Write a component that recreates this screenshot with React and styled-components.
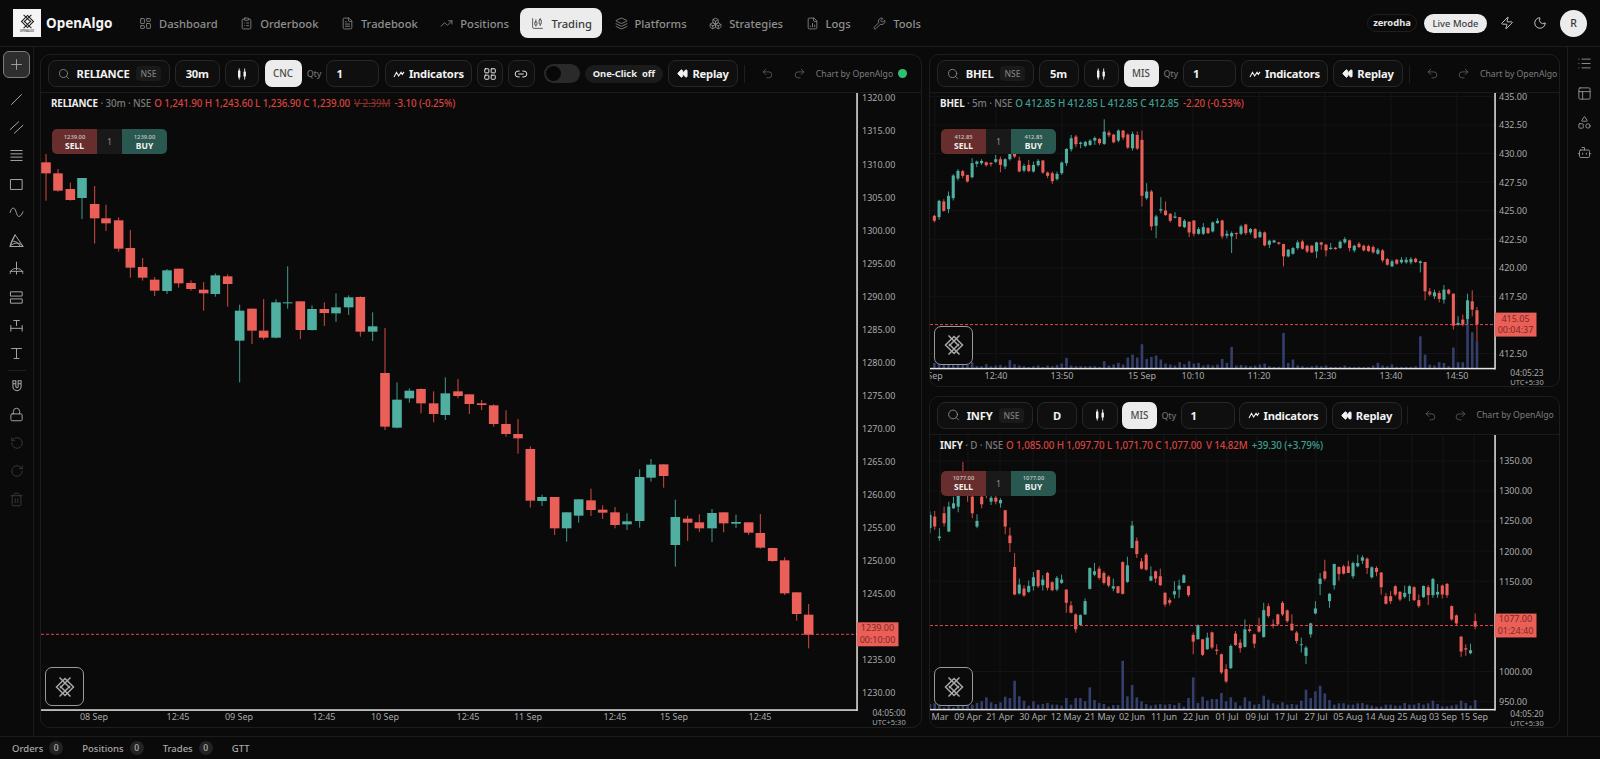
import React from 'react'
import styled, { createGlobalStyle } from 'styled-components'
import {
  Bot,
  ChartCandlestick,
  ClipboardList,
  FileChartColumn,
  FileText,
  LayoutDashboard,
  LayoutGrid,
  Layers,
  Link2,
  List,
  Lock,
  Moon,
  PanelsTopLeft,
  Plus,
  Redo2,
  RotateCcw,
  RotateCw,
  Search,
  Shapes,
  Trash2,
  TrendingUp,
  Undo2,
  Boxes,
  Wrench,
  Zap,
  Rewind,
} from 'lucide-react'

const RED = '#ea5f58'
const GREEN = '#4fb0a2'
const RED_WICK = '#d34a45'
const GREEN_WICK = '#3f9c8f'

const GlobalStyle = createGlobalStyle`
  html, body {
    margin: 0;
    height: 100%;
    background: #0a0a0a;
    color: #e8e8e8;
    font-family: "Noto Sans", "Open Sans", Arial, sans-serif;
  }
  #root { height: 100%; }
  * { box-sizing: border-box; }
`

const Page = styled.div`
  display: flex;
  flex-direction: column;
  height: 759px;
  overflow: hidden;
`

const Nav = styled.header`
  align-items: center;
  border-bottom: 1px solid #1c1c1c;
  display: flex;
  flex: 0 0 47px;
  padding: 0 13px;
`

const Brand = styled.div`
  align-items: center;
  color: #f4f4f4;
  display: flex;
  flex: 0 0 115px;
  font-size: 13.5px;
  font-weight: 700;
  gap: 5px;
`

const BrandTile = styled.div`
  align-items: center;
  background: #f4f4f4;
  color: #222;
  display: flex;
  flex-direction: column;
  height: 28px;
  justify-content: center;
  width: 28px;

  span {
    color: #555;
    font-size: 2.5px;
    line-height: 3px;
  }
`

const NavItem = styled.div`
  align-items: center;
  background: ${props => (props.$active ? '#ececec' : 'transparent')};
  border-radius: 8px;
  color: ${props => (props.$active ? '#3a3a3a' : '#8f8f8f')};
  display: flex;
  font-size: 11.2px;
  font-weight: 500;
  gap: 7px;
  height: 30px;
  margin-right: 1.5px;
  padding: 0 10px 0 11px;
`

const NavRight = styled.div`
  align-items: center;
  display: flex;
  margin-left: auto;
`

const BrokerPill = styled.div`
  border: 1px solid #1f1f1f;
  border-radius: 10px;
  color: #e6e6e6;
  font-size: 9.4px;
  font-weight: 700;
  height: 18px;
  line-height: 16px;
  margin-right: 7px;
  text-align: center;
  width: 50px;
`

const ModePill = styled.div`
  background: #ececec;
  border-radius: 10px;
  color: #3c3c3c;
  font-size: 9.4px;
  font-weight: 500;
  height: 19px;
  line-height: 19px;
  text-align: center;
  width: 63px;
`

const NavIconButton = styled.div`
  align-items: center;
  color: #d8d8d8;
  display: flex;
  height: 27px;
  justify-content: center;
  margin-left: ${props => props.$ml || 0}px;
  width: 14px;
`

const Avatar = styled.div`
  align-items: center;
  background: #ececec;
  border-radius: 50%;
  color: #333;
  display: flex;
  font-size: 10.5px;
  font-weight: 500;
  height: 27px;
  justify-content: center;
  margin-left: 13px;
  width: 27px;
`

const Body = styled.div`
  display: flex;
  flex: 1;
  min-height: 0;
`

const LeftBar = styled.aside`
  align-items: center;
  border-right: 1px solid #1c1c1c;
  display: flex;
  flex: 0 0 34px;
  flex-direction: column;
  padding-top: 4px;
`

const ToolButton = styled.div`
  align-items: center;
  background: ${props => (props.$active ? '#2e2e2e' : 'transparent')};
  border: ${props => (props.$active ? '1.5px solid #7c7c7c' : 'none')};
  border-radius: 6px;
  color: ${props => (props.$dim ? '#3b3b3b' : '#a6a6a6')};
  display: flex;
  flex: 0 0 ${props => (props.$active ? '27px' : '28.3px')};
  justify-content: center;
  margin-bottom: ${props => (props.$active ? '7px' : 0)};
  width: 27px;
`

const ToolDivider = styled.div`
  background: #1e1e1e;
  flex: 0 0 1px;
  margin: 2px 0 1px;
  width: 18px;
`

const Main = styled.main`
  display: grid;
  flex: 1;
  gap: 9px 7px;
  grid-template-columns: 882px 631px;
  grid-template-rows: 1fr 1fr;
  min-width: 0;
  padding: 7px 7px 8px 6px;
`

const Card = styled.section`
  border: 1px solid #1d1d1d;
  border-radius: 10px;
  display: flex;
  flex-direction: column;
  grid-row: ${props => (props.$tall ? '1 / span 2' : 'auto')};
  min-height: 0;
  overflow: hidden;
`

const CardHeader = styled.div`
  align-items: center;
  border-bottom: 1px solid #1a1a1a;
  display: flex;
  flex: 0 0 38px;
  gap: ${props => props.$gap}px;
  overflow: hidden;
  padding: 0 0 0 6.5px;
`

const Control = styled.div`
  align-items: center;
  background: #0f0f0f;
  border: 1px solid #272727;
  border-radius: 8px;
  color: #f2f2f2;
  display: flex;
  flex: 0 0 ${props => props.$w}px;
  font-size: 11.2px;
  font-weight: 700;
  gap: ${props => (props.$left ? 7 : 4)}px;
  height: 27px;
  justify-content: ${props => (props.$left ? 'flex-start' : 'center')};
  letter-spacing: -0.2px;
  min-width: 0;
  padding: ${props => (props.$left ? '0 8px 0 9px' : 0)};
  white-space: nowrap;
`

const ProductButton = styled.div`
  align-items: center;
  background: #ececec;
  border-radius: 7px;
  color: #4a4a4a;
  display: flex;
  flex: 0 0 ${props => props.$w}px;
  font-size: 9.8px;
  font-weight: 500;
  height: 27px;
  justify-content: center;
`

const QtyLabel = styled.span`
  color: #6f6f6f;
  flex: 0 0 14.5px;
  font-size: 9px;
  font-weight: 500;
  letter-spacing: -0.3px;
  white-space: nowrap;
`

const ExchangeTag = styled.span`
  background: #1a1a1a;
  border-radius: 4px;
  color: #7d7d7d;
  font-size: 8.5px;
  font-weight: 500;
  letter-spacing: 0;
  line-height: 15px;
  margin-left: auto;
  padding: 0 4px;
`

const Toggle = styled.div`
  background: #2a2a2a;
  border-radius: 10px;
  flex: 0 0 36px;
  height: 19px;
  margin-left: 4px;
  padding: 2px;

  &::before {
    background: #080808;
    border-radius: 50%;
    content: '';
    display: block;
    height: 15px;
    width: 15px;
  }
`

const OneClick = styled.div`
  background: #1b1b1b;
  border-radius: 9px;
  color: #ededed;
  display: flex;
  flex: 0 0 78px;
  font-size: 9.4px;
  font-weight: 700;
  gap: 5px;
  height: 18px;
  justify-content: center;
  line-height: 18px;
  white-space: nowrap;
`

const HeaderDivider = styled.div`
  background: #1e1e1e;
  flex: 0 0 1px;
  height: 18px;
  margin: 0 1px;
`

const HistoryButton = styled.div`
  color: #6c6c6c;
  display: flex;
  flex: 0 0 13px;
  justify-content: center;
  margin-left: ${props => props.$ml}px;
`

const Attribution = styled.span`
  color: #7c7c7c;
  flex: 0 0 auto;
  font-size: 8.7px;
  margin-left: ${props => props.$ml}px;
  white-space: nowrap;
`

const StatusDot = styled.span`
  background: #2fbf71;
  border-radius: 50%;
  flex: 0 0 9px;
  height: 9px;
`

const Cursor = styled.svg`
  color: #cfcfcf;
  flex: 0 0 5px;
  margin: 6px 0 0 9px;
`

const ChartArea = styled.div`
  flex: 1;
  min-height: 0;
  position: relative;
`

const ChartSvg = styled.svg`
  display: block;
  height: 100%;
  overflow: visible;
  width: 100%;

  text {
    fill: #a9a9a9;
    font-family: "Noto Sans", Arial, sans-serif;
    font-size: 9px;
  }

  text.tag {
    fill: #7a2a25;
    font-size: 9px;
  }

  text.clock {
    font-size: 8.4px;
  }

  text.utc {
    font-size: 7.5px;
  }
`

const Legend = styled.div`
  font-size: 9.8px;
  font-weight: 500;
  left: ${props => props.$left}px;
  letter-spacing: -0.1px;
  line-height: 14px;
  position: absolute;
  top: 4px;
  white-space: nowrap;

  b {
    color: #eeeeee;
    font-weight: 700;
  }
`

const LegendMeta = styled.span`
  color: #7a7a7a;
  margin-right: 3px;
`

const LegendValue = styled.span`
  color: ${props => (props.$up ? '#3f9f90' : '#d9433f')};
  margin-right: 4px;
  opacity: ${props => (props.$strike ? 0.6 : 1)};
  text-decoration: ${props => (props.$strike ? 'line-through' : 'none')};
`

const OrderWidget = styled.div`
  border-radius: 5px;
  display: flex;
  height: 25px;
  left: 11px;
  overflow: hidden;
  position: absolute;
  top: 36px;
  width: 115px;
`

const OrderSide = styled.div`
  align-items: center;
  background: ${props => (props.$buy ? '#28584f' : '#682e2d')};
  color: #f2f2f2;
  display: flex;
  flex: 0 0 45px;
  flex-direction: column;
  font-size: 8.5px;
  font-weight: 700;
  justify-content: center;
  line-height: 10px;

  small {
    color: #c8c8c8;
    font-size: 5.8px;
    font-weight: 500;
    line-height: 8px;
  }
`

const OrderQty = styled.div`
  background: #191919;
  color: #9a9a9a;
  flex: 0 0 25px;
  font-size: 8px;
  line-height: 25px;
  text-align: center;
`

const WatermarkBadge = styled.div`
  align-items: center;
  background: #0a0a0a;
  border: 1.5px solid #9a9a9a;
  border-radius: 7px;
  bottom: 21px;
  color: #a9a9a9;
  display: flex;
  height: 39px;
  justify-content: center;
  left: 4px;
  position: absolute;
  width: 39px;
`

const RightBar = styled.aside`
  align-items: center;
  border-left: 1px solid #1c1c1c;
  color: #9c9c9c;
  display: flex;
  flex: 0 0 33px;
  flex-direction: column;
  gap: 14.5px;
  padding-top: 9px;
`

const Footer = styled.footer`
  align-items: center;
  border-top: 1px solid #1c1c1c;
  color: #a8a8a8;
  display: flex;
  flex: 0 0 23px;
  font-size: 9.5px;
  font-weight: 500;
  gap: 19px;
  padding-left: 12px;
`

const FooterTab = styled.div`
  align-items: center;
  display: flex;
  gap: 6px;
`

const CountBadge = styled.span`
  background: #232323;
  border-radius: 50%;
  color: #b5b5b5;
  font-size: 8.5px;
  height: 14px;
  line-height: 14px;
  text-align: center;
  width: 14px;
`

// woven diamond, same mark in the brand tile and on the charts
const LatticeMark = ({ size = 24 }) => (
  <svg fill="none" height={size} stroke="currentColor" strokeWidth="1.500" viewBox="0 0 24 24" width={size}>
    <path d="M12 3.500 20.500 12 12 20.500 3.500 12z" />
    <path d="M6.500 2.500 17 13M17.500 2.500 7 13M7 11l10.500 10.500M17 11 6.500 21.500" />
  </svg>
)

const stroke = {
  fill: 'none',
  stroke: 'currentColor',
  strokeLinecap: 'round',
  strokeLinejoin: 'round',
  strokeWidth: 1.4,
}

const Tool = ({ d, size = 17 }) => (
  <svg height={size} viewBox="0 0 24 24" width={size} {...stroke}>
    <path d={d} />
  </svg>
)

const CandleTypeIcon = () => (
  <svg fill="currentColor" height="14" viewBox="0 0 14 14" width="14">
    <rect height="7" rx="0.6" width="2.400" x="3" y="3.500" />
    <rect height="11" width="0.9" x="3.750" y="1.500" />
    <rect height="5" rx="0.6" width="2.400" x="8.500" y="4.500" />
    <rect height="11" width="0.9" x="9.250" y="1.500" />
  </svg>
)

const WaveIcon = () => (
  <svg fill="none" height="10" stroke="currentColor" strokeWidth="1.300" viewBox="0 0 14 12" width="12">
    <path d="M1 9.500 4 4l2.500 4.500L9.500 4l1.500 2.500L13 3.500" />
  </svg>
)

const ToolIcons = [
  { key: 'line', d: 'M5 19 19 5' },
  { key: 'parallel', d: 'M3 15 15 4M9 20 21 9' },
  { key: 'rows', d: 'M4 5h16M4 9.700h16M4 14.300h16M4 19h16' },
  { key: 'rect', d: 'M4 5h16v14H4z' },
  { key: 'wave', d: 'M3 12c2-8 6-8 8-2s3 9 6 7 3-4 4-6' },
  { key: 'fib', d: 'M3 20 10 4l11 16zM3 20c1-6 4-11 7-16M3 20c6-6 13-6 18 0M8 13c4 0 7 3 9 7' },
  { key: 'fork', d: 'M12 3v11M3 19c1-6 5-7 9-7s8 1 9 7M3 16h18M12 16v4' },
  { key: 'stack', d: 'M4 4h16v6H4zM4 14h16v6H4z' },
  { key: 'measure', d: 'M4 12v8M20 12v8M4 16h16M8 5h8M12 5v7' },
  { key: 'text', d: 'M5 5h14M12 5v14M8.500 19h7' },
]

const toCandles = (rows, sx, ox, oy) =>
  rows.map(([x, wt, wb, bt, bb, up]) => ({
    x: ox + x / sx,
    wt: oy + wt / 3,
    wb: oy + wb / 3,
    bt: oy + bt / 3,
    bb: oy + bb / 3,
    up: !!up,
  }))

const relianceRows = [
  [18, 12, 152, 37, 70, 0], [54, 57, 125, 70, 122, 0], [91, 98, 152, 117, 150, 0], [126, 84, 207, 84, 144, 1],
  [164, 108, 281, 162, 205, 0], [198, 164, 243, 205, 220, 0], [236, 202, 305, 211, 296, 0], [271, 240, 383, 294, 353, 0],
  [308, 324, 392, 351, 383, 0], [344, 381, 438, 389, 422, 0], [381, 357, 432, 361, 423, 1], [416, 356, 413, 356, 400, 0],
  [453, 391, 422, 399, 417, 0], [491, 396, 482, 419, 430, 0], [526, 370, 440, 376, 432, 1], [563, 373, 470, 379, 402, 0],
  [599, 464, 697, 482, 572, 1], [636, 476, 582, 476, 542, 0], [671, 447, 569, 542, 563, 0], [708, 448, 565, 457, 563, 1],
  [743, 349, 476, 457, 460, 1], [781, 454, 567, 454, 540, 0], [816, 466, 542, 477, 540, 1], [853, 457, 528, 477, 489, 0],
  [888, 430, 516, 472, 490, 1], [926, 436, 495, 442, 472, 1], [961, 439, 560, 441, 545, 0], [998, 487, 573, 529, 545, 1],
  [1035, 534, 840, 669, 830, 0], [1071, 697, 835, 749, 833, 1], [1108, 715, 758, 722, 745, 1], [1143, 715, 790, 717, 760, 0],
  [1181, 724, 817, 760, 792, 0], [1216, 682, 810, 730, 795, 1],
]

const relianceRowsTail = [
  [54, 27, 85, 64, 78, 0], [88, 73, 132, 73, 102, 0], [125, 90, 120, 100, 105, 0], [161, 103, 170, 106, 162, 0],
  [198, 121, 200, 162, 192, 0], [234, 147, 251, 192, 205, 0], [271, 229, 413, 237, 392, 0], [306, 374, 408, 381, 393, 1],
  [344, 381, 495, 381, 475, 0], [380, 427, 515, 427, 475, 1], [416, 388, 458, 388, 437, 1], [453, 356, 438, 391, 420, 0],
  [488, 406, 447, 419, 428, 0], [525, 411, 475, 427, 465, 0], [561, 430, 480, 454, 463, 1], [599, 298, 473, 321, 453, 1],
  [633, 267, 335, 284, 323, 1], [671, 283, 353, 283, 318, 0], [706, 389, 590, 441, 525, 1], [743, 437, 513, 446, 458, 0],
  [778, 433, 486, 457, 475, 0], [816, 417, 516, 429, 475, 1], [851, 427, 487, 427, 460, 0], [888, 434, 474, 456, 461, 1],
  [926, 457, 495, 457, 488, 0], [961, 432, 536, 489, 533, 0], [998, 533, 575, 534, 573, 0], [1034, 562, 675, 571, 670, 0],
  [1070, 667, 752, 667, 732, 0], [1106, 702, 835, 734, 794, 0],
]

const bhelRows = [
  [315, 338, 318, 333, 0], [270, 330, 273, 322, 1], [268, 306, 275, 303, 0], [245, 310, 258, 298, 1], [193, 272, 197, 265, 1],
  [178, 212, 183, 206, 1], [180, 205, 184, 198, 0], [195, 218, 195, 215, 0], [145, 206, 160, 202, 1], [152, 172, 155, 162, 1],
  [148, 165, 153, 160, 1], [155, 170, 157, 166, 0], [157, 170, 159, 163, 0], [135, 160, 148, 156, 1], [140, 187, 148, 165, 0],
  [145, 178, 148, 170, 1], [118, 152, 125, 148, 1], [110, 145, 115, 140, 0], [140, 187, 152, 185, 0], [162, 187, 168, 182, 1],
  [150, 186, 165, 184, 0], [155, 188, 165, 185, 1], [148, 170, 153, 166, 1], [150, 192, 152, 188, 0], [185, 205, 188, 198, 0],
  [185, 222, 190, 214, 0], [185, 212, 192, 208, 1], [155, 195, 158, 190, 1], [115, 168, 117, 160, 1], [75, 125, 85, 118, 1],
  [75, 112, 80, 103, 0], [95, 115, 98, 102, 1], [93, 112, 96, 108, 1], [88, 108, 92, 105, 1], [80, 105, 84, 92, 1],
  [85, 105, 87, 100, 0], [28, 105, 65, 102, 1], [62, 82, 68, 76, 0], [72, 100, 74, 97, 0], [58, 97, 62, 92, 1],
  [60, 90, 62, 83, 0], [70, 117, 74, 113, 0], [65, 122, 72, 115, 1], [65, 120, 75, 116, 0], [62, 290, 90, 258, 0],
  [220, 270, 245, 265, 1], [240, 362, 245, 350, 0], [315, 385, 320, 348, 1], [262, 310, 298, 302, 1], [275, 318, 302, 316, 0],
  [310, 338, 312, 333, 0], [307, 326, 320, 324, 1], [322, 352, 322, 350, 0], [328, 355, 333, 352, 1], [335, 382, 336, 368, 0],
  [332, 380, 332, 372, 0], [352, 375, 358, 372, 1], [340, 376, 352, 372, 1], [352, 373, 355, 370, 0], [335, 368, 338, 365, 1],
  [325, 342, 333, 340, 1], [330, 387, 332, 380, 0], [362, 386, 372, 378, 1], [365, 430, 370, 380, 1], [368, 388, 370, 372, 0],
  [345, 376, 350, 372, 1], [342, 376, 344, 370, 0], [355, 374, 358, 368, 1], [355, 387, 358, 385, 0], [362, 385, 367, 382, 1],
  [365, 410, 368, 407, 0], [390, 415, 393, 405, 1], [390, 400, 392, 398, 1], [396, 406, 398, 402, 0], [402, 470, 403, 440, 0],
  [418, 443, 420, 440, 1], [412, 435, 415, 432, 1], [392, 420, 398, 415, 1], [390, 420, 395, 417, 0], [405, 430, 408, 425, 0],
  [405, 430, 408, 428, 0], [396, 445, 398, 425, 1], [396, 420, 398, 405, 0], [402, 440, 405, 422, 0], [400, 420, 414, 418, 1],
  [412, 420, 414, 418, 0], [392, 417, 396, 415, 1], [382, 402, 388, 398, 1], [390, 425, 392, 415, 0], [405, 428, 408, 422, 1],
  [397, 415, 402, 412, 0], [405, 425, 408, 422, 0], [405, 427, 409, 424, 0], [407, 432, 412, 428, 0], [415, 435, 420, 432, 1],
  [418, 458, 422, 452, 0], [445, 468, 448, 465, 0], [450, 472, 455, 470, 1], [448, 465, 450, 462, 0], [442, 462, 450, 458, 1],
  [442, 462, 450, 458, 1], [442, 464, 448, 458, 1], [444, 460, 447, 457, 0], [452, 488, 455, 460, 1], [457, 572, 457, 545, 0],
  [535, 560, 545, 555, 0], [540, 568, 548, 560, 1], [543, 578, 550, 568, 0], [526, 582, 540, 570, 1], [538, 555, 540, 552, 0],
  [552, 660, 552, 648, 0], [620, 648, 640, 646, 1], [615, 650, 630, 645, 0], [552, 645, 572, 628, 1], [542, 620, 575, 600, 0],
  [592, 695, 602, 645, 0],
]

const bhelVolumes = [
  760, 762, 762, 762, 762, 762, 762, 766, 758, 770, 770, 764, 770, 768, 766, 770, 752, 764, 768, 770, 772, 770, 768, 772,
  768, 770, 766, 762, 745, 768, 770, 770, 770, 770, 770, 772, 755, 768, 765, 760, 765, 744, 735, 744, 704, 748, 742, 738,
  750, 762, 765, 768, 758, 764, 755, 762, 760, 768, 765, 768, 765, 748, 760, 712, 768, 766, 768, 770, 768, 765, 762, 770,
  772, 772, 670, 760, 750, 768, 770, 773, 770, 768, 770, 768, 772, 772, 772, 768, 772, 773, 772, 773, 772, 768, 760, 768,
  770, 765, 772, 772, 772, 772, 770, 680, 735, 765, 768, 758, 760, 770, 714, 758, 758, 628, 668, 695,
]

const infyRows = [
  [180, 245, 190, 230, 1], [178, 235, 195, 225, 0], [230, 268, 255, 260, 1], [165, 225, 185, 215, 0], [150, 242, 165, 240, 1],
  [135, 172, 155, 170, 1], [90, 182, 120, 165, 1], [30, 100, 60, 90, 0], [90, 150, 100, 120, 0], [120, 200, 135, 185, 0],
  [188, 230, 208, 225, 1], [130, 170, 135, 158, 0], [100, 140, 110, 130, 0], [130, 160, 138, 150, 1], [125, 158, 138, 150, 0],
  [140, 168, 145, 155, 1], [175, 248, 176, 225, 0], [228, 302, 252, 275, 0], [305, 432, 347, 430, 0], [382, 430, 400, 427, 1],
  [402, 437, 412, 433, 0], [388, 425, 404, 422, 1], [362, 418, 378, 405, 1], [356, 410, 356, 405, 0], [372, 418, 385, 402, 1],
  [362, 418, 365, 410, 0], [390, 420, 393, 417, 0], [374, 420, 380, 415, 1], [370, 398, 385, 395, 1], [415, 485, 415, 455, 0],
  [450, 487, 463, 485, 0], [487, 545, 490, 535, 0], [490, 525, 492, 522, 1], [442, 492, 450, 490, 1], [348, 415, 350, 413, 1],
  [335, 375, 360, 370, 1], [345, 385, 352, 380, 0], [360, 400, 365, 395, 0], [372, 408, 376, 403, 0], [382, 420, 405, 412, 1],
  [405, 428, 405, 425, 0], [330, 430, 332, 428, 0], [316, 395, 342, 392, 1], [208, 290, 222, 290, 1], [258, 320, 268, 308, 0],
  [320, 355, 330, 352, 0], [305, 358, 310, 355, 0], [345, 390, 375, 388, 1], [358, 395, 360, 382, 0], [352, 404, 375, 402, 0],
  [422, 467, 425, 460, 0], [440, 463, 447, 455, 0], [390, 442, 420, 430, 1], [385, 440, 403, 415, 1], [368, 395, 372, 395, 1],
  [403, 437, 405, 432, 0], [545, 610, 552, 572, 0], [520, 565, 522, 565, 1], [565, 616, 565, 612, 0], [545, 597, 560, 595, 1],
  [542, 595, 544, 590, 0], [580, 612, 596, 600, 0], [608, 670, 610, 665, 0], [640, 697, 655, 692, 0], [580, 655, 585, 652, 1],
  [540, 585, 548, 582, 0], [565, 605, 575, 592, 0], [505, 590, 535, 588, 1], [520, 545, 535, 540, 0], [548, 592, 550, 578, 0],
  [500, 545, 525, 542, 0], [455, 560, 477, 558, 1], [457, 500, 465, 495, 0], [505, 532, 520, 525, 0], [488, 525, 490, 520, 0],
  [450, 495, 455, 490, 0], [475, 515, 478, 510, 0], [490, 540, 518, 538, 0], [540, 578, 545, 570, 0], [560, 605, 580, 583, 1],
  [585, 640, 590, 615, 1], [515, 560, 517, 550, 1], [450, 490, 472, 487, 1], [365, 432, 382, 398, 1], [325, 388, 360, 382, 0],
  [425, 470, 428, 450, 1], [337, 415, 338, 402, 1], [345, 388, 347, 368, 0], [340, 370, 345, 367, 0], [328, 365, 345, 365, 0],
  [330, 382, 335, 375, 1], [310, 348, 335, 345, 1], [312, 338, 318, 328, 1], [318, 368, 322, 350, 0], [345, 382, 348, 378, 1],
  [345, 375, 350, 362, 0], [362, 430, 364, 408, 0], [425, 460, 435, 458, 0], [420, 458, 435, 450, 0], [402, 435, 405, 430, 0],
  [420, 450, 422, 445, 0], [403, 442, 425, 437, 1], [402, 450, 405, 428, 1], [405, 450, 408, 447, 0], [430, 470, 447, 465, 0],
  [403, 440, 404, 438, 1], [402, 462, 408, 432, 0], [380, 440, 383, 432, 1], [398, 440, 422, 430, 1], [400, 442, 403, 430, 0],
  [395, 440, 398, 432, 0], [463, 510, 465, 505, 0], [490, 522, 493, 517, 0], [555, 618, 557, 602, 0], [580, 615, 592, 596, 0],
  [578, 610, 598, 607, 1], [487, 535, 510, 527, 0],
]

const infyVolumes = [
  760, 758, 755, 770, 760, 770, 760, 755, 758, 762, 757, 752, 740, 755, 760, 755, 738, 742, 690, 737, 750, 765, 752, 762,
  760, 757, 762, 762, 765, 742, 762, 742, 742, 752, 710, 748, 757, 760, 768, 763, 763, 630, 737, 703, 740, 752, 760, 765,
  762, 760, 762, 760, 763, 757, 768, 742, 680, 757, 738, 750, 745, 745, 727, 752, 740, 755, 765, 740, 752, 762, 760, 735,
  747, 758, 762, 755, 762, 760, 762, 750, 717, 742, 722, 705, 728, 748, 762, 758, 758, 762, 762, 758, 757, 762, 765, 768,
  768, 762, 762, 765, 765, 757, 762, 762, 757, 762, 758, 750, 760, 767, 767, 765, 762, 750, 757, 765, 748,
]

const ZOOM_SX = 2.751

const relianceChart = {
  id: 'reliance',
  box: [41, 93, 880, 634],
  plot: [857, 710],
  bodyWidth: 9.6,
  candles: [...toCandles(relianceRows, 3, 40, 150), ...toCandles(relianceRowsTail, 3, 440, 370)],
  volumes: [],
  grid: false,
  prices: Array.from({ length: 19 }, (_, i) => ({ label: (1320 - i * 5).toFixed(2), y: 98 + i * 33.05 })).filter(
    p => p.label !== '1240.00',
  ),
  priceX: 862,
  times: [
    ['08 Sep', 94], ['12:45', 178], ['09 Sep', 239], ['12:45', 324], ['10 Sep', 385], ['12:45', 468],
    ['11 Sep', 528], ['12:45', 615], ['15 Sep', 674], ['12:45', 760],
  ],
  timeY: 716.500,
  tag: { price: '1239.00', timer: '00:10:00', line: 634.3 },
  clock: { text: '04:05:00', x: 889, y: 713 },
}

const bhelChart = {
  id: 'bhel',
  box: [930, 93, 629, 293],
  plot: [1495, 369],
  bodyWidth: 3.1,
  candles: toCandles(
    bhelRows.map((row, i) => [12 + i * 12.98, ...row]),
    ZOOM_SX,
    930,
    110,
  ),
  volumes: bhelVolumes.map((top, i) => ({ x: 930 + (12 + i * 12.98) / ZOOM_SX, top: 110 + top / 3 })),
  grid: true,
  prices: ['435.00', '432.50', '430.00', '427.50', '425.00', '422.50', '420.00', '417.50', null, '412.50']
    .map((label, i) => ({ label, y: 96.500 + i * 28.6 }))
    .filter(p => p.label),
  priceX: 1499,
  times: [
    ['Sep', 935], ['12:40', 996], ['13:50', 1062], ['15 Sep', 1142], ['10:10', 1193], ['11:20', 1259],
    ['12:30', 1325], ['13:40', 1391], ['14:50', 1457],
  ],
  timeY: 376.500,
  tag: { price: '415.05', timer: '00:04:37', line: 325 },
  clock: { text: '04:05:23', x: 1527, y: 373 },
}

const infyChart = {
  id: 'infy',
  box: [930, 433, 629, 294],
  plot: [1495, 709],
  bodyWidth: 3.1,
  candles: toCandles(
    infyRows.map((row, i) => [i * 12.93, ...row]),
    ZOOM_SX,
    930,
    450,
  ),
  volumes: infyVolumes.map((top, i) => ({ x: 930 + (i * 12.93) / ZOOM_SX, top: 450 + top / 3 })),
  grid: true,
  prices: [
    ['1350.00', 0], ['1300.00', 1], ['1250.00', 2], ['1200.00', 3], ['1150.00', 4], ['1000.00', 7], ['950.00', 8],
  ].map(([label, i]) => ({ label, y: 459 + i * 30.25 })),
  priceX: 1499,
  times: [
    ['Mar', 940], ['09 Apr', 968], ['21 Apr', 1000], ['30 Apr', 1033], ['12 May', 1066], ['21 May', 1100],
    ['02 Jun', 1132], ['11 Jun', 1164], ['22 Jun', 1196], ['01 Jul', 1227], ['09 Jul', 1257], ['17 Jul', 1286],
    ['27 Jul', 1316], ['05 Aug', 1348], ['14 Aug', 1380], ['25 Aug', 1412], ['03 Sep', 1443], ['15 Sep', 1474],
  ],
  timeY: 716.500,
  tag: { price: '1077.00', timer: '01:24:40', line: 624.5 },
  clock: { text: '04:05:20', x: 1527, y: 713 },
}

// the svg baseline sits a little high with dominantBaseline middle
const TEXT_NUDGE = 1

const CandleChart = ({ chart }) => {
  const { box, plot, candles, volumes, bodyWidth, id, tag, clock } = chart
  const [left, top, width, height] = box
  const [plotRight, plotBottom] = plot
  return (
    <ChartSvg preserveAspectRatio="none" viewBox={`${left} ${top} ${width} ${height}`}>
      <defs>
        <clipPath id={`clip-${id}`}>
          <rect height={plotBottom - top} width={plotRight - left} x={left} y={top} />
        </clipPath>
      </defs>
      {chart.grid &&
        chart.prices.map(p => (
          <line key={p.label} stroke="#141416" x1={left} x2={plotRight} y1={p.y} y2={p.y} />
        ))}
      {chart.grid &&
        chart.times.map(([label, x]) => (
          <line key={label} stroke="#141416" x1={x} x2={x} y1={top} y2={plotBottom} />
        ))}
      <g clipPath={`url(#clip-${id})`}>
        {volumes.map(v => (
          <rect fill="#343f6b" height={plotBottom - v.top} key={v.x} width={2.600} x={v.x - 1.300} y={v.top} />
        ))}
        {candles.map(c => (
          <g key={c.x}>
            <line stroke={c.up ? GREEN_WICK : RED_WICK} x1={c.x} x2={c.x} y1={c.wt} y2={c.wb} />
            <rect
              fill={c.up ? GREEN : RED}
              height={Math.max(c.bb - c.bt, 1)}
              width={bodyWidth}
              x={c.x - bodyWidth / 2}
              y={c.bt}
            />
          </g>
        ))}
      </g>
      <line stroke="#e4454a" strokeDasharray="3 2" x1={left} x2={plotRight} y1={tag.line} y2={tag.line} />
      <rect fill="#e6e6e6" height={plotBottom - top + 1} width={1.500} x={plotRight - 0.700} y={top} />
      <rect fill="#e6e6e6" height={1.500} width={plotRight - left} x={left} y={plotBottom - 0.700} />
      {chart.prices.map(p => (
        <text dominantBaseline="middle" key={p.label} x={chart.priceX} y={p.y + TEXT_NUDGE}>
          {p.label}
        </text>
      ))}
      {chart.times.map(([label, x]) => (
        <text dominantBaseline="middle" key={`${label}${x}`} textAnchor="middle" x={x} y={chart.timeY + TEXT_NUDGE}>
          {label}
        </text>
      ))}
      <rect fill="#ec5f57" height={24} width={41.500} x={plotRight} y={tag.line - 12} />
      <text className="tag" dominantBaseline="middle" textAnchor="middle" x={plotRight + 20.500} y={tag.line - 5.500}>
        {tag.price}
      </text>
      <text className="tag" dominantBaseline="middle" textAnchor="middle" x={plotRight + 20.500} y={tag.line + 6}>
        {tag.timer}
      </text>
      <text className="clock" dominantBaseline="middle" textAnchor="middle" x={clock.x} y={clock.y + TEXT_NUDGE}>
        {clock.text}
      </text>
      <text className="utc" dominantBaseline="middle" textAnchor="middle" x={clock.x} y={clock.y + 10}>
        UTC+5:30
      </text>
    </ChartSvg>
  )
}

const LegendLine = ({ symbol, meta, up, ohlc, volume, struck, change, changeUp, left }) => (
  <Legend $left={left}>
    <b>{symbol}</b> <LegendMeta>· {meta} · NSE</LegendMeta>
    <LegendValue $up={up}>{ohlc}</LegendValue>
    {volume && (
      <LegendValue $strike={struck} $up={up}>
        {volume}
      </LegendValue>
    )}
    <LegendValue $up={changeUp}>{change}</LegendValue>
  </Legend>
)

const OrderPanel = ({ price }) => (
  <OrderWidget>
    <OrderSide>
      <small>{price}</small>
      SELL
    </OrderSide>
    <OrderQty>1</OrderQty>
    <OrderSide $buy>
      <small>{price}</small>
      BUY
    </OrderSide>
  </OrderWidget>
)

const SearchControl = ({ symbol, width }) => (
  <Control $left $w={width}>
    <Search color="#9a9a9a" size={14} strokeWidth={1.500} />
    {symbol}
    <ExchangeTag>NSE</ExchangeTag>
  </Control>
)

const History = ({ textGap }) => (
  <>
    <HeaderDivider />
    <HistoryButton $ml={10}>
      <Undo2 size={13} strokeWidth={1.300} />
    </HistoryButton>
    <HistoryButton $ml={13}>
      <Redo2 size={13} strokeWidth={1.300} />
    </HistoryButton>
    <Attribution $ml={textGap}>Chart by OpenAlgo</Attribution>
  </>
)

const MagnetIcon = () => (
  <svg fill="none" height="14" stroke="currentColor" strokeWidth="1.800" viewBox="0 0 24 24" width="14">
    <path d="M5 3v10a7 7 0 0 0 14 0V3h-5v10a2 2 0 0 1-4 0V3zM5 8h5M14 8h5" />
  </svg>
)

const NAV_ITEMS = [
  { label: 'Dashboard', Icon: LayoutDashboard },
  { label: 'Orderbook', Icon: ClipboardList },
  { label: 'Tradebook', Icon: FileText },
  { label: 'Positions', Icon: TrendingUp },
  { label: 'Trading', Icon: ChartCandlestick, active: true },
  { label: 'Platforms', Icon: Layers },
  { label: 'Strategies', Icon: Boxes },
  { label: 'Logs', Icon: FileChartColumn },
  { label: 'Tools', Icon: Wrench },
]

const App = () => (
  <>
    <GlobalStyle />
    <Page>
      <Nav>
        <Brand>
          <BrandTile>
            <LatticeMark size={17} />
            <span>OPENALGO</span>
          </BrandTile>
          OpenAlgo
        </Brand>
        {NAV_ITEMS.map(({ label, Icon, active }) => (
          <NavItem $active={active} key={label}>
            <Icon size={13} strokeWidth={1.500} />
            {label}
          </NavItem>
        ))}
        <NavRight>
          <BrokerPill>zerodha</BrokerPill>
          <ModePill>Live Mode</ModePill>
          <NavIconButton $ml={13}>
            <Zap size={14} strokeWidth={1.500} />
          </NavIconButton>
          <NavIconButton $ml={19}>
            <Moon size={14} strokeWidth={1.500} />
          </NavIconButton>
          <Avatar>R</Avatar>
        </NavRight>
      </Nav>
      <Body>
        <LeftBar>
          <ToolButton $active>
            <Plus size={17} strokeWidth={1.300} />
          </ToolButton>
          {ToolIcons.map(tool => (
            <ToolButton key={tool.key}>
              <Tool d={tool.d} />
            </ToolButton>
          ))}
          <ToolDivider />
          <ToolButton>
            <MagnetIcon />
          </ToolButton>
          <ToolButton>
            <Lock size={15} strokeWidth={1.500} />
          </ToolButton>
          <ToolButton $dim>
            <RotateCcw size={14} strokeWidth={1.500} />
          </ToolButton>
          <ToolButton $dim>
            <RotateCw size={14} strokeWidth={1.500} />
          </ToolButton>
          <ToolButton $dim>
            <Trash2 size={15} strokeWidth={1.500} />
          </ToolButton>
        </LeftBar>
        <Main>
          <Card $tall>
            <CardHeader $gap={5.2}>
              <SearchControl symbol="RELIANCE" width={122} />
              <Control $w={45}>30m</Control>
              <Control $w={34.5}>
                <CandleTypeIcon />
              </Control>
              <ProductButton $w={37}>CNC</ProductButton>
              <QtyLabel>Qty</QtyLabel>
              <Control $left $w={53}>1</Control>
              <Control $w={87.5}>
                <WaveIcon />
                Indicators
              </Control>
              <Control $w={25.5}>
                <LayoutGrid size={14} strokeWidth={1.600} />
              </Control>
              <Control $w={26.5}>
                <Link2 size={14} strokeWidth={1.600} />
              </Control>
              <Toggle />
              <OneClick>
                <span>One-Click</span>
                <span>off</span>
              </OneClick>
              <Control $w={70}>
                <Rewind fill="currentColor" size={11} />
                Replay
              </Control>
              <History textGap={5} />
              <StatusDot />
              <Cursor fill="currentColor" height="7" viewBox="0 0 5 7" width="5">
                <path d="M0 0v6l1.500-1.300L3 7l1-.6L2.600 4H5z" />
              </Cursor>
            </CardHeader>
            <ChartArea>
              <CandleChart chart={relianceChart} />
              <LegendLine
                change="-3.10 (-0.25%)"
                left={10}
                meta="30m"
                ohlc="O 1,241.90 H 1,243.60 L 1,236.90 C 1,239.00"
                struck
                symbol="RELIANCE"
                volume="V 2.39M"
              />
              <OrderPanel price="1239.00" />
              <WatermarkBadge>
                <LatticeMark />
              </WatermarkBadge>
            </ChartArea>
          </Card>
          <Card>
            <CardHeader $gap={5}>
              <SearchControl symbol="BHEL" width={97} />
              <Control $w={40}>5m</Control>
              <Control $w={35}>
                <CandleTypeIcon />
              </Control>
              <ProductButton $w={35}>MIS</ProductButton>
              <QtyLabel>Qty</QtyLabel>
              <Control $left $w={53}>1</Control>
              <Control $w={87}>
                <WaveIcon />
                Indicators
              </Control>
              <Control $w={70}>
                <Rewind fill="currentColor" size={11} />
                Replay
              </Control>
              <History textGap={5} />
            </CardHeader>
            <ChartArea>
              <CandleChart chart={bhelChart} />
              <LegendLine
                change="-2.20 (-0.53%)"
                left={10}
                meta="5m"
                ohlc="O 412.85 H 412.85 L 412.85 C 412.85"
                symbol="BHEL"
                up
              />
              <OrderPanel price="412.85" />
              <WatermarkBadge>
                <LatticeMark />
              </WatermarkBadge>
            </ChartArea>
          </Card>
          <Card>
            <CardHeader $gap={4.5}>
              <SearchControl symbol="INFY" width={96} />
              <Control $w={40}>D</Control>
              <Control $w={36}>
                <CandleTypeIcon />
              </Control>
              <ProductButton $w={35}>MIS</ProductButton>
              <QtyLabel>Qty</QtyLabel>
              <Control $left $w={54}>1</Control>
              <Control $w={88}>
                <WaveIcon />
                Indicators
              </Control>
              <Control $w={70}>
                <Rewind fill="currentColor" size={11} />
                Replay
              </Control>
              <History textGap={5} />
            </CardHeader>
            <ChartArea>
              <CandleChart chart={infyChart} />
              <LegendLine
                change="+39.30 (+3.79%)"
                changeUp
                left={10}
                meta="D"
                ohlc="O 1,085.00 H 1,097.70 L 1,071.70 C 1,077.00"
                symbol="INFY"
                volume="V 14.82M"
              />
              <OrderPanel price="1077.00" />
              <WatermarkBadge>
                <LatticeMark />
              </WatermarkBadge>
            </ChartArea>
          </Card>
        </Main>
        <RightBar>
          <List size={15} strokeWidth={1.400} />
          <PanelsTopLeft size={15} strokeWidth={1.400} />
          <Shapes size={15} strokeWidth={1.400} />
          <Bot size={15} strokeWidth={1.400} />
        </RightBar>
      </Body>
      <Footer>
        <FooterTab>
          Orders <CountBadge>0</CountBadge>
        </FooterTab>
        <FooterTab>
          Positions <CountBadge>0</CountBadge>
        </FooterTab>
        <FooterTab>
          Trades <CountBadge>0</CountBadge>
        </FooterTab>
        <FooterTab>GTT</FooterTab>
      </Footer>
    </Page>
  </>
)

export default App
